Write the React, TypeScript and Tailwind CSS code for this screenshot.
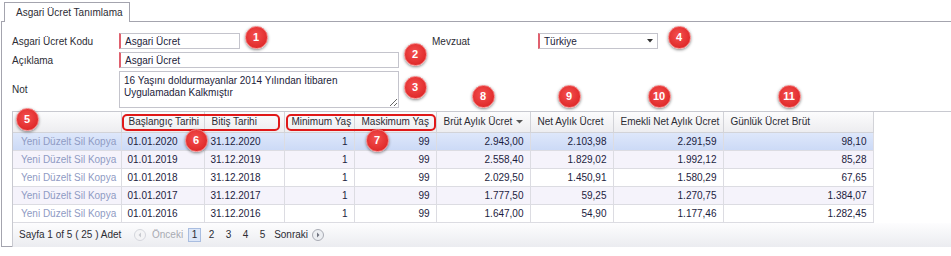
import React from "react";
import clsx from "clsx";

const rows = [
  { start: "01.01.2020", end: "31.12.2020", min: "1", max: "99", brut: "2.943,00", net: "2.103,98", emekli: "2.291,59", gunluk: "98,10" },
  { start: "01.01.2019", end: "31.12.2019", min: "1", max: "99", brut: "2.558,40", net: "1.829,02", emekli: "1.992,12", gunluk: "85,28" },
  { start: "01.01.2018", end: "31.12.2018", min: "1", max: "99", brut: "2.029,50", net: "1.450,91", emekli: "1.580,29", gunluk: "67,65" },
  { start: "01.01.2017", end: "31.12.2017", min: "1", max: "99", brut: "1.777,50", net: "59,25", emekli: "1.270,75", gunluk: "1.384,07" },
  { start: "01.01.2016", end: "31.12.2016", min: "1", max: "99", brut: "1.647,00", net: "54,90", emekli: "1.177,46", gunluk: "1.282,45" },
];

const badges = [
  { n: "1", x: 256, y: 37 },
  { n: "2", x: 415, y: 54 },
  { n: "3", x: 415, y: 87 },
  { n: "4", x: 679, y: 37 },
  { n: "5", x: 27, y: 119 },
  { n: "6", x: 196, y: 140 },
  { n: "7", x: 377, y: 140 },
  { n: "8", x: 483, y: 96 },
  { n: "9", x: 569, y: 96 },
  { n: "10", x: 659, y: 96 },
  { n: "11", x: 789, y: 96 },
];

const Badge: React.FC<{ n: string; x: number; y: number }> = ({ n, x, y }) => (
  <div
    className="absolute w-[23px] h-[23px] rounded-full flex items-center justify-center text-white font-bold text-[11px] bg-[radial-gradient(circle_at_45%_40%,#f45050,#d81c1c)] border border-[#f27a7a] shadow-[0_1px_3px_rgba(0,0,0,0.45)]"
    style={{ left: x - 11.5, top: y - 11.5 }}
  >
    {n}
  </div>
);

const CircleArrow: React.FC<{ dir: "left" | "right"; disabled?: boolean }> = ({ dir, disabled }) => (
  <svg width="12" height="12" viewBox="0 0 12 12">
    <circle cx="6" cy="6" r="5.5" fill={disabled ? "#f4f4f6" : "#eceef2"} stroke={disabled ? "#d4d6dc" : "#a8abb4"} />
    {dir === "left" ? (
      <path d="M7 3.5 L4.5 6 L7 8.5 Z" fill={disabled ? "#c8cad0" : "#707480"} />
    ) : (
      <path d="M5 3.5 L7.5 6 L5 8.5 Z" fill={disabled ? "#c8cad0" : "#707480"} />
    )}
  </svg>
);

const headCell = "h-[20px] px-[7px] text-left font-normal text-[#2c2c34] border-r border-b border-[#d2d3d8] whitespace-nowrap";
const cell = "h-[18px] px-[6px] border-r border-b border-[#dcdce2] whitespace-nowrap";
const inputBox = "h-[16px] border border-[#c4c4cc] border-l-2 border-l-[#e0606e] flex items-center pl-[4px] text-[#1c1c3a]";

export default function App() {
  return (
    <div className="relative w-[951px] h-[256px] bg-white overflow-hidden text-[10px] text-[#2c2c34] font-['Liberation_Sans',Arial,sans-serif]">
      {/* tab strip */}
      <div className="h-[21px] pl-[4px] pt-[2px] flex">
        <div className="h-[20px] w-[126px] pl-[11px] flex items-center bg-white border border-b-0 border-[#a4a4ae] relative z-10">
          Asgari Ücret Tanımlama
        </div>
      </div>

      {/* panel */}
      <div className="ml-px h-[226px] border-t border-l border-b border-[#a4a4ae] pl-[10px] pt-[11px] flex flex-col">
        {/* form */}
        <div className="flex">
          <div className="flex flex-col gap-[3px]">
            <div className="flex items-center h-[16px]">
              <span className="w-[107px]">Asgari Ücret Kodu</span>
              <div className={clsx(inputBox, "w-[121px]")}>Asgari Ücret</div>
            </div>
            <div className="flex items-center h-[16px]">
              <span className="w-[107px]">Açıklama</span>
              <div className={clsx(inputBox, "w-[280px]")}>Asgari Ücret</div>
            </div>
            <div className="flex items-center h-[37px]">
              <span className="w-[107px]">Not</span>
              <textarea
                readOnly
                defaultValue={"16 Yaşını doldurmayanlar 2014 Yılından İtibaren Uygulamadan Kalkmıştır"}
                className="w-[280px] h-[37px] border border-[#c4c4cc] px-[4px] pt-[3px] text-[10px] leading-[12px] text-[#1c1c3a] outline-none font-['Liberation_Sans',Arial,sans-serif]"
              />
            </div>
          </div>
          <div className="ml-[33px] flex items-start">
            <div className="flex items-center h-[16px]">
              <span className="w-[106px]">Mevzuat</span>
              <div className={clsx(inputBox, "w-[120px] justify-between pr-[4px]")}>
                <span>Türkiye</span>
                <svg width="6" height="4" viewBox="0 0 6 4">
                  <path d="M0 0 H6 L3 3.5 Z" fill="#333" />
                </svg>
              </div>
            </div>
          </div>
        </div>

        {/* grid */}
        <div className="mt-[3px] border-t border-l border-[#c8c9d0] flex flex-col flex-1">
          <table className="border-collapse table-fixed w-[860px]">
            <colgroup>
              <col className="w-[108px]" />
              <col className="w-[83px]" />
              <col className="w-[80px]" />
              <col className="w-[70px]" />
              <col className="w-[82px]" />
              <col className="w-[94px]" />
              <col className="w-[83px]" />
              <col className="w-[110px]" />
              <col className="w-[150px]" />
            </colgroup>
            <thead>
              <tr className="bg-[linear-gradient(#fcfcfd,#ededf0)]">
                <th className={headCell}></th>
                <th className={headCell}>Başlangıç Tarihi</th>
                <th className={headCell}>Bitiş Tarihi</th>
                <th className={headCell}>Minimum Yaş</th>
                <th className={headCell}>Maskimum Yaş</th>
                <th className={headCell}>
                  <div className="flex items-center justify-between">
                    <span>Brüt Aylık Ücret</span>
                    <svg width="7" height="4" viewBox="0 0 7 4">
                      <path d="M0 0 H7 L3.5 3.5 Z" fill="#555" />
                    </svg>
                  </div>
                </th>
                <th className={headCell}>Net Aylık Ücret</th>
                <th className={headCell}>Emekli Net Aylık Ücret</th>
                <th className={headCell}>Günlük Ücret Brüt</th>
              </tr>
            </thead>
            <tbody>
              {rows.map((r, i) => (
                <tr
                  key={r.start}
                  className={clsx(
                    "text-[#1c1c3e]",
                    i === 0 && "bg-[linear-gradient(#dfe8fb,#ccdaf6)]",
                    i !== 0 && i % 2 === 1 && "bg-[#f5f3fb]",
                    i !== 0 && i % 2 === 0 && "bg-white"
                  )}
                >
                  <td className={clsx(cell, "pl-[8px] text-[#8f9bc4]")}>Yeni Düzelt Sil Kopya</td>
                  <td className={cell}>{r.start}</td>
                  <td className={cell}>{r.end}</td>
                  <td className={clsx(cell, "text-right")}>{r.min}</td>
                  <td className={clsx(cell, "text-right")}>{r.max}</td>
                  <td className={clsx(cell, "text-right")}>{r.brut}</td>
                  <td className={clsx(cell, "text-right")}>{r.net}</td>
                  <td className={clsx(cell, "text-right")}>{r.emekli}</td>
                  <td className={clsx(cell, "text-right")}>{r.gunluk}</td>
                </tr>
              ))}
            </tbody>
          </table>

          {/* pager */}
          <div className="mt-auto h-[24px] bg-[linear-gradient(#fdfdfe,#ebecf0)] flex items-center pl-[6px] text-[#2c2c34]">
            <span className="w-[115px]">Sayfa 1 of 5 ( 25 ) Adet</span>
            <div className="flex items-center gap-[6px]">
              <CircleArrow dir="left" disabled />
              <span className="text-[#a8aab2]">Önceki</span>
            </div>
            <div className="flex items-center ml-[5px] gap-[4px]">
              <span className="w-[13px] h-[14px] flex items-center justify-center bg-[#dde7f8] border border-[#a9bde0]">1</span>
              <span className="w-[13px] text-center">2</span>
              <span className="w-[13px] text-center">3</span>
              <span className="w-[13px] text-center">4</span>
              <span className="w-[13px] text-center">5</span>
            </div>
            <div className="flex items-center ml-[5px] gap-[4px]">
              <span>Sonraki</span>
              <CircleArrow dir="right" />
            </div>
          </div>
        </div>
      </div>

      {/* annotation frames */}
      <div className="absolute left-[122px] top-[114px] w-[158px] h-[17px] border-2 border-[#e01818] rounded-[5px]" />
      <div className="absolute left-[286px] top-[114px] w-[150px] h-[17px] border-2 border-[#e01818] rounded-[5px]" />

      {badges.map((b) => (
        <Badge key={b.n} {...b} />
      ))}
    </div>
  );
}
